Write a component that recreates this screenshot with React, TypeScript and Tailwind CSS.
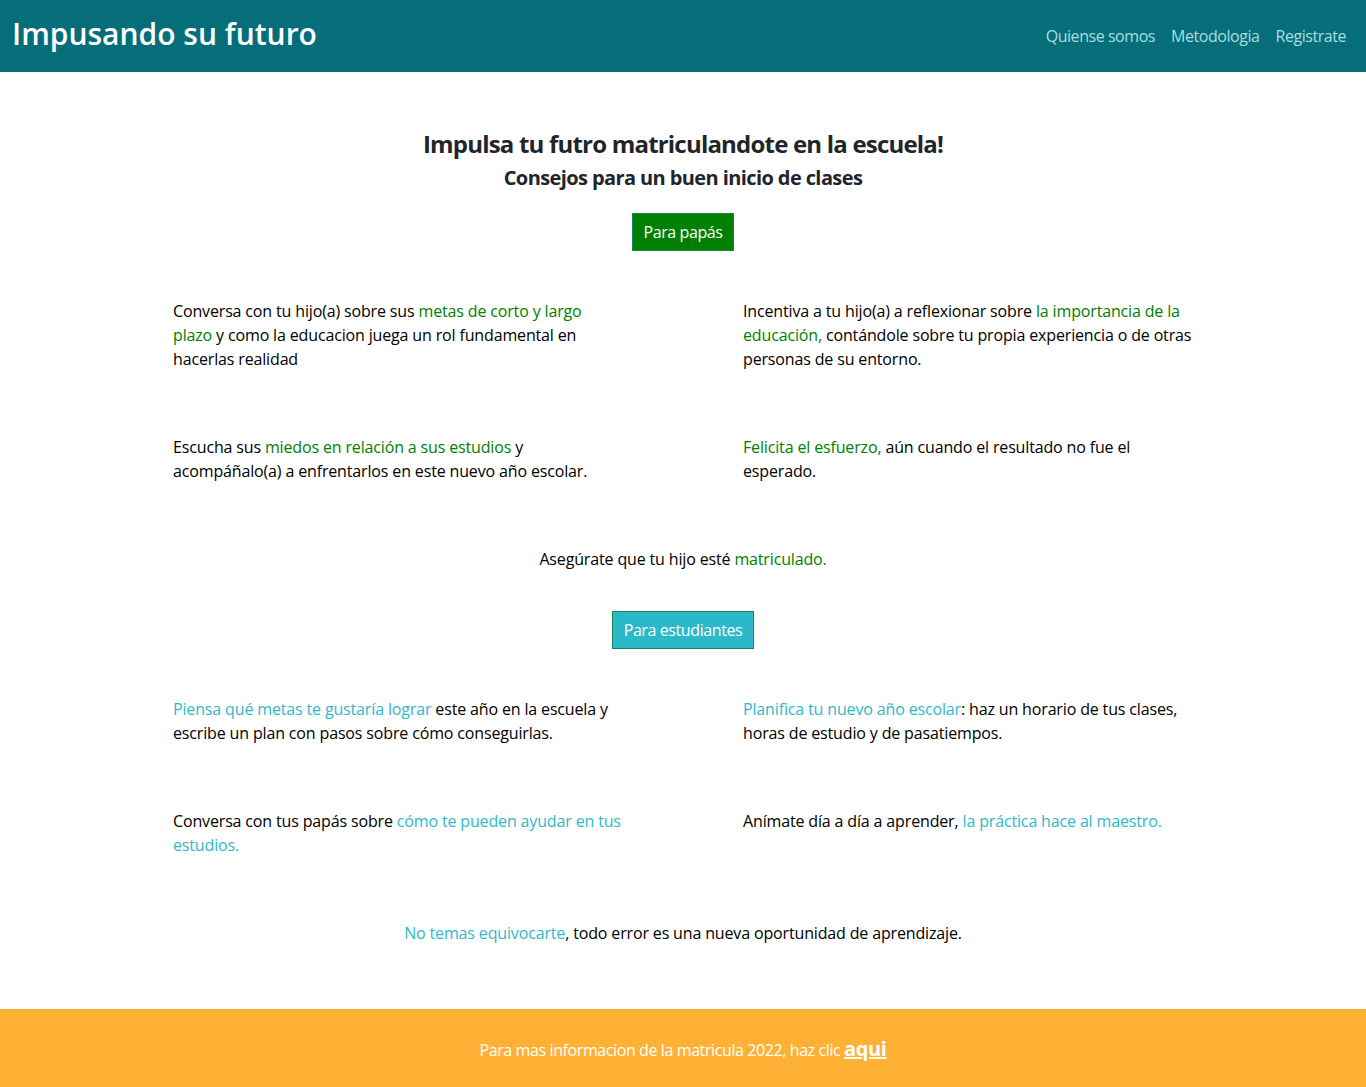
const green = "text-[#008000]";
const teal = "text-[#2fb9c9]";

const Tip = ({ children }: { children: React.ReactNode }) => (
  <div className="px-[60px]">
    <p className="w-[450px] leading-6">{children}</p>
  </div>
);

const App = () => {
  return (
    <div className="min-h-[1087px] flex flex-col bg-white text-black font-['Open_Sans',sans-serif] text-base tracking-[-0.15px]">
      <nav className="h-[72px] bg-[#056e78] flex items-center justify-between px-3">
        <span className="text-white text-[30px] font-semibold tracking-normal mb-[5px]">Impusando su futuro</span>
        <ul className="flex text-[#a9dde2] tracking-[-0.45px]">
          <li className="px-2">Quiense somos</li>
          <li className="px-2">Metodologia</li>
          <li className="px-2">Registrate</li>
        </ul>
      </nav>

      <main className="flex-1 pt-[56px]">
        <div className="text-center text-[#212529]">
          <h1 className="text-2xl font-bold leading-[32px] tracking-[-0.8px]">
            Impulsa tu futro matriculandote en la escuela!
          </h1>
          <h2 className="text-xl font-bold mt-[6px] leading-[24px] tracking-[-0.6px]">
            Consejos para un buen inicio de clases
          </h2>
        </div>

        <div className="flex justify-center mt-[23px]">
          <button className="w-[102px] bg-[#008000] border border-[#198754] text-white h-[38px] tracking-[-0.4px]">
            Para papás
          </button>
        </div>

        <div className="w-[1140px] mx-auto mt-[48px] grid grid-cols-2 gap-y-16">
          <Tip>
            Conversa con tu hijo(a) sobre sus <span className={green}>metas de corto y largo plazo</span> y como la
            educacion juega un rol fundamental en hacerlas realidad
          </Tip>
          <Tip>
            Incentiva a tu hijo(a) a reflexionar sobre <span className={green}>la importancia de la educación,</span>{" "}
            contándole sobre tu propia experiencia o de otras personas de su entorno.
          </Tip>
          <Tip>
            Escucha sus <span className={green}>miedos en relación a sus estudios</span> y acompáñalo(a) a enfrentarlos
            en este nuevo año escolar.
          </Tip>
          <Tip>
            <span className={green}>Felicita el esfuerzo,</span> aún cuando el resultado no fue el esperado.
          </Tip>
        </div>

        <p className="text-center leading-6 mt-16">
          Asegúrate que tu hijo esté <span className={green}>matriculado.</span>
        </p>

        <div className="flex justify-center mt-10">
          <button className="w-[142px] bg-[#2bb8c8] border border-[#198754] text-white h-[38px] tracking-[-0.4px]">
            Para estudiantes
          </button>
        </div>

        <div className="w-[1140px] mx-auto mt-[48px] grid grid-cols-2 gap-y-16">
          <Tip>
            <span className={teal}>Piensa qué metas te gustaría lograr</span> este año en la escuela y escribe un plan
            con pasos sobre cómo conseguirlas.
          </Tip>
          <Tip>
            <span className={teal}>Planifica tu nuevo año escolar</span>: haz un horario de tus clases, horas de estudio
            y de pasatiempos.
          </Tip>
          <Tip>
            Conversa con tus papás sobre <span className={teal}>cómo te pueden ayudar en tus estudios.</span>
          </Tip>
          <Tip>
            Anímate día a día a aprender, <span className={teal}>la práctica hace al maestro.</span>
          </Tip>
        </div>

        <p className="text-center leading-6 mt-16 mb-16">
          <span className={teal}>No temas equivocarte</span>, todo error es una nueva oportunidad de aprendizaje.
        </p>
      </main>

      <footer className="h-[78px] bg-[#ffb136] flex items-center justify-center text-white">
        <p className="tracking-[-0.4px] pt-[2px]">
          Para mas informacion de la matricula 2022, haz clic{" "}
          <a className="font-bold text-xl underline">aqui</a>
        </p>
      </footer>
    </div>
  );
};

export default App;
